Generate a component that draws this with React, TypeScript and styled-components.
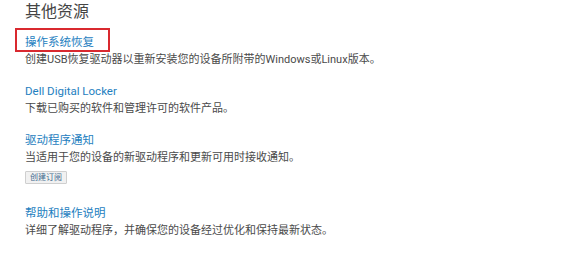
import { createGlobalStyle, styled } from "styled-components";

const GlobalStyle = createGlobalStyle`
  html, body {
    margin: 0;
    padding: 0;
    background: #fff;
  }
  body {
    font-family: Roboto, "Noto Sans CJK SC", sans-serif;
    color: #444;
  }
`;

const Page = styled.div`
  width: 582px;
  height: 255px;
  box-sizing: border-box;
  padding: 2px 25px 0;
  overflow: hidden;
`;

const Title = styled.h2`
  margin: 0;
  font-size: 16px;
  line-height: 20px;
  font-weight: 400;
  color: #444;
`;

const List = styled.div`
  margin-top: 12px;
  display: flex;
  flex-direction: column;
  gap: 15px;
`;

const Item = styled.div`
  display: flex;
  flex-direction: column;
  align-items: flex-start;
`;

const ItemLink = styled.a<{ $marked?: boolean }>`
  position: relative;
  font-size: 11.5px;
  line-height: 17px;
  color: #1e80c0;
  text-decoration: none;

  ${(p) =>
    p.$marked &&
    `
    &::after {
      content: "";
      position: absolute;
      left: -10px;
      right: -16px;
      top: -6px;
      bottom: -1px;
      border: 2px solid #d9292f;
    }
  `}
`;

const Desc = styled.p`
  margin: 0;
  font-size: 11px;
  line-height: 17px;
  color: #4a4a4a;
`;

const SubscribeButton = styled.button`
  margin: 5px 0 6px;
  height: 13px;
  padding: 0 4px;
  box-sizing: border-box;
  display: flex;
  align-items: center;
  background: #f1f1f1;
  border: 1px solid #cfcfcf;
  border-radius: 1px;
  font-family: Roboto, "Noto Sans CJK SC", sans-serif;
  font-size: 8px;
  line-height: 11px;
  color: #3f6a8e;
`;

const resources = [
  {
    title: "操作系统恢复",
    desc: "创建USB恢复驱动器以重新安装您的设备所附带的Windows或Linux版本。",
    marked: true,
  },
  {
    title: "Dell Digital Locker",
    desc: "下载已购买的软件和管理许可的软件产品。",
  },
  {
    title: "驱动程序通知",
    desc: "当适用于您的设备的新驱动程序和更新可用时接收通知。",
    action: "创建订阅",
  },
  {
    title: "帮助和操作说明",
    desc: "详细了解驱动程序，并确保您的设备经过优化和保持最新状态。",
  },
];

export default function App() {
  return (
    <>
      <GlobalStyle />
      <Page>
        <Title>其他资源</Title>
        <List>
          {resources.map((r) => (
            <Item key={r.title}>
              <ItemLink href="#" $marked={r.marked}>
                {r.title}
              </ItemLink>
              <Desc>{r.desc}</Desc>
              {r.action && <SubscribeButton>{r.action}</SubscribeButton>}
            </Item>
          ))}
        </List>
      </Page>
    </>
  );
}
